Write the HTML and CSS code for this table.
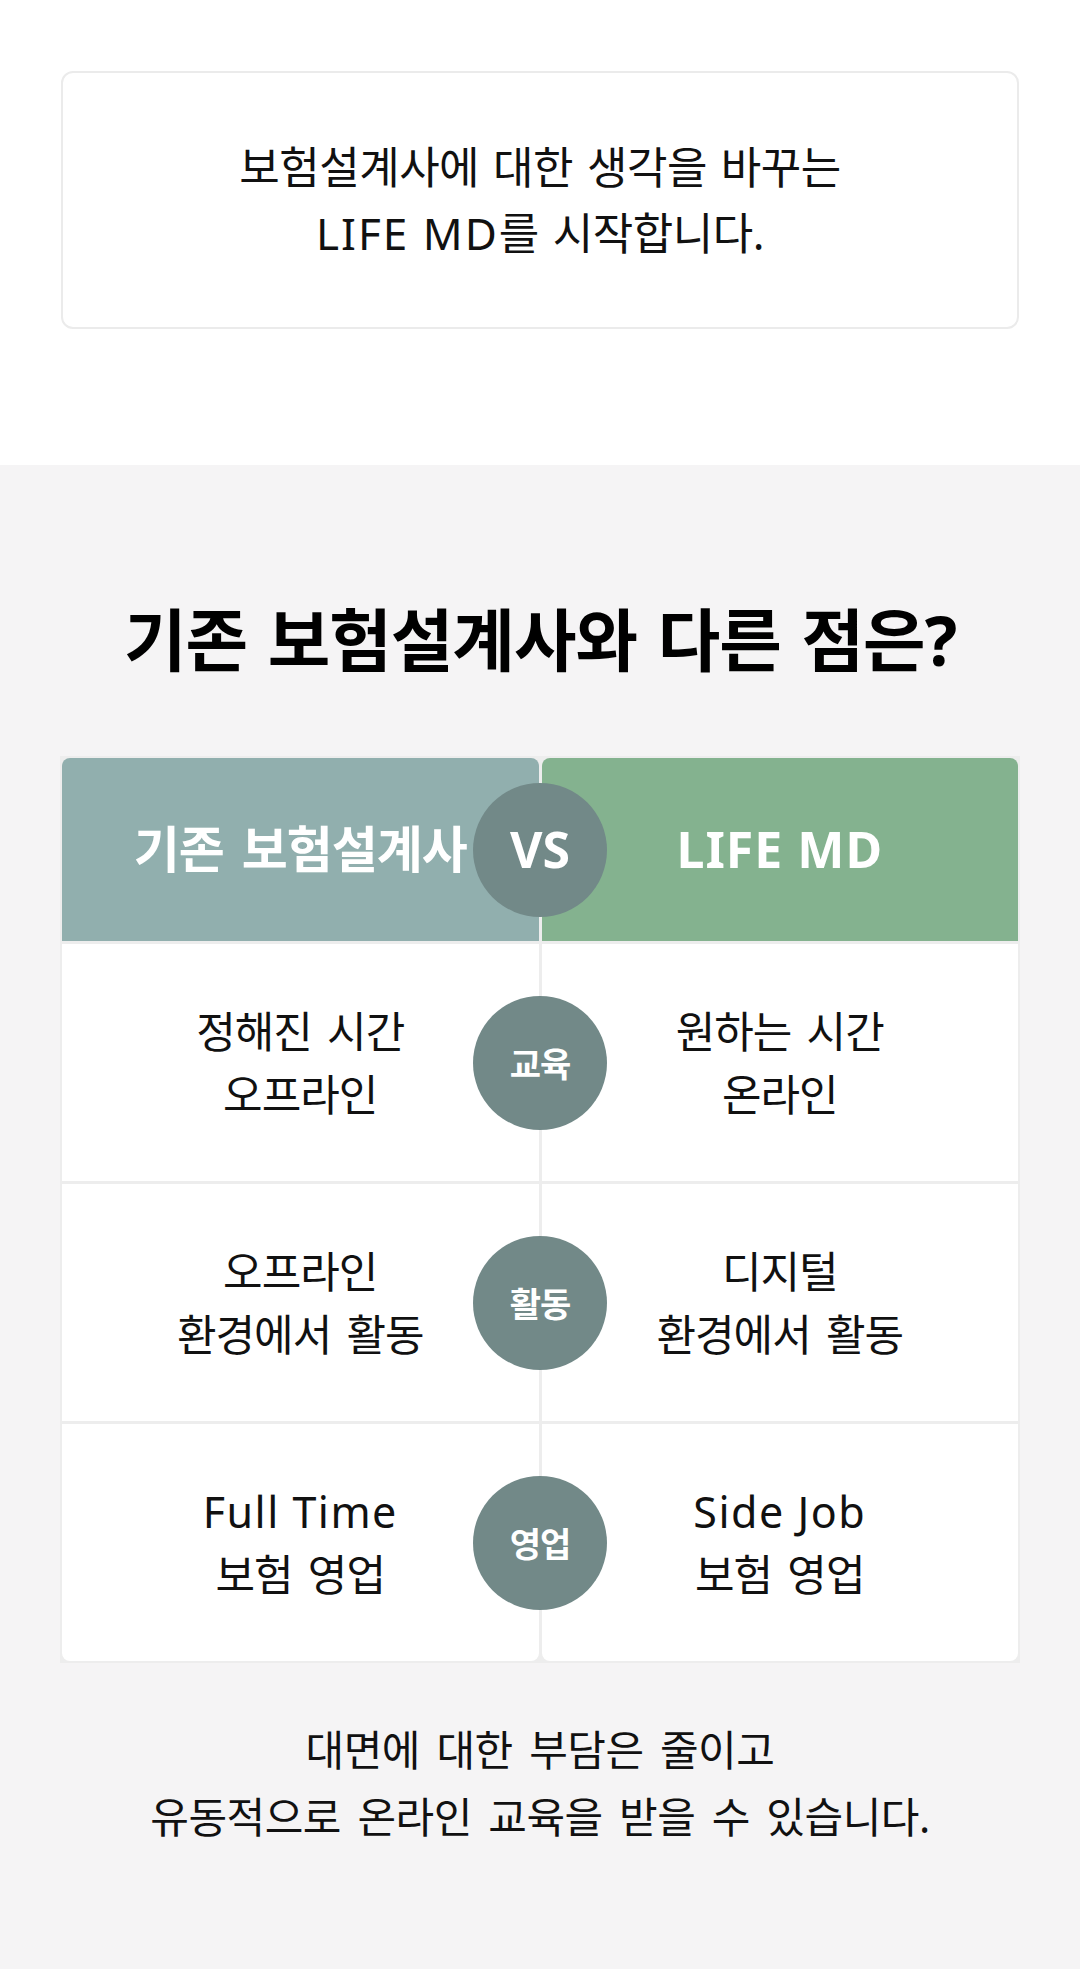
FILE: index.html
```html
<!DOCTYPE html>
<html lang="ko">
<head>
<meta charset="utf-8">
<title>LIFE MD</title>
<link rel="stylesheet" href="styles.css">
</head>
<body>
<section class="intro">
  <div class="intro-card">
    <p class="intro-text">보험설계사에 대한 생각을 바꾸는<br><span class="en">LIFE MD</span>를 시작합니다.</p>
  </div>
</section>

<section class="diff">
  <h2 class="diff-title">기존 보험설계사와 다른 점은?</h2>

  <div class="compare">
    <div class="row row-head">
      <div class="cell head head-old"><p class="cell-text">기존 보험설계사</p></div>
      <div class="cell head head-new"><p class="cell-text en-bold">LIFE MD</p></div>
      <span class="badge badge-vs">VS</span>
    </div>
    <div class="row">
      <div class="cell"><p class="cell-text">정해진 시간<br>오프라인</p></div>
      <div class="cell"><p class="cell-text">원하는 시간<br>온라인</p></div>
      <span class="badge">교육</span>
    </div>
    <div class="row">
      <div class="cell"><p class="cell-text">오프라인<br>환경에서 활동</p></div>
      <div class="cell"><p class="cell-text">디지털<br>환경에서 활동</p></div>
      <span class="badge">활동</span>
    </div>
    <div class="row row-last">
      <div class="cell"><p class="cell-text"><span class="en">Full Time</span><br>보험 영업</p></div>
      <div class="cell"><p class="cell-text"><span class="en">Side Job</span><br>보험 영업</p></div>
      <span class="badge">영업</span>
    </div>
  </div>

  <p class="diff-note">대면에 대한 부담은 줄이고<br>유동적으로 온라인 교육을 받을 수 있습니다.</p>
</section>
</body>
</html>
```

FILE: styles.css
```css
* {
  box-sizing: border-box;
}

html, body {
  margin: 0;
  padding: 0;
}

body {
  width: 1080px;
  font-family: "Noto Sans", "Noto Sans CJK KR", sans-serif;
  color: #111111;
  background: #ffffff;
}

/* ---------- intro ---------- */
.intro {
  background: #ffffff;
  padding: 71px 61px 136px;
}

.intro-card {
  border: 2px solid #ebebeb;
  border-radius: 12px;
  background: #ffffff;
  padding: 61px 20px;
}

.intro-text {
  margin: 0;
  text-align: center;
  font-size: 44px;
  line-height: 66px;
  letter-spacing: -0.5px;
  word-spacing: 3px;
  font-weight: 400;
}

.intro-text .en {
  letter-spacing: 2px;
  word-spacing: 0;
}

/* ---------- diff section ---------- */
.diff {
  background: #f5f4f5;
  padding: 135px 60px 120px;
}

.diff-title {
  margin: 0 0 76px;
  text-align: center;
  font-size: 68px;
  line-height: 80px;
  font-weight: 700;
  letter-spacing: -1px;
  word-spacing: 4px;
  color: #000000;
}

.compare {
  display: flex;
  flex-direction: column;
  gap: 3px;
  padding: 2px;
  background: #ededed;
}

.row {
  position: relative;
  display: grid;
  grid-template-columns: 1fr 1fr;
  column-gap: 3px;
  height: 237px;
}

.row-head {
  height: 183px;
}

.cell {
  display: flex;
  align-items: center;
  justify-content: center;
  background: #ffffff;
  color: #111111;
}

.cell-text {
  margin: 0;
  text-align: center;
  font-size: 43px;
  line-height: 63px;
  letter-spacing: -1px;
  word-spacing: 5px;
}

.cell-text .en {
  letter-spacing: 1.5px;
  word-spacing: 0;
}

.head .cell-text {
  color: #ffffff;
  font-weight: 700;
  font-size: 50px;
  letter-spacing: -1px;
  word-spacing: 6px;
}

.head {
  border-radius: 8px 8px 0 0;
}

.head-old {
  background: #91afae;
}

.head-new {
  background: #84b28f;
}

.head .en-bold {
  font-size: 50px;
  letter-spacing: 1px;
  word-spacing: 0;
}

.row-last .cell {
  border-radius: 0 0 8px 8px;
}

.badge {
  position: absolute;
  left: 50%;
  top: 50%;
  transform: translate(-50%, -50%);
  width: 134px;
  height: 134px;
  border-radius: 50%;
  background: #728988;
  color: #ffffff;
  display: flex;
  align-items: center;
  justify-content: center;
  font-size: 34px;
  font-weight: 700;
  letter-spacing: -1px;
}

.badge-vs {
  font-size: 50px;
  letter-spacing: 0;
  padding-bottom: 2px;
}

.diff-note {
  margin: 53px 0 0;
  text-align: center;
  font-size: 42px;
  line-height: 67px;
  letter-spacing: -0.5px;
  word-spacing: 6px;
  color: #111111;
}
```
